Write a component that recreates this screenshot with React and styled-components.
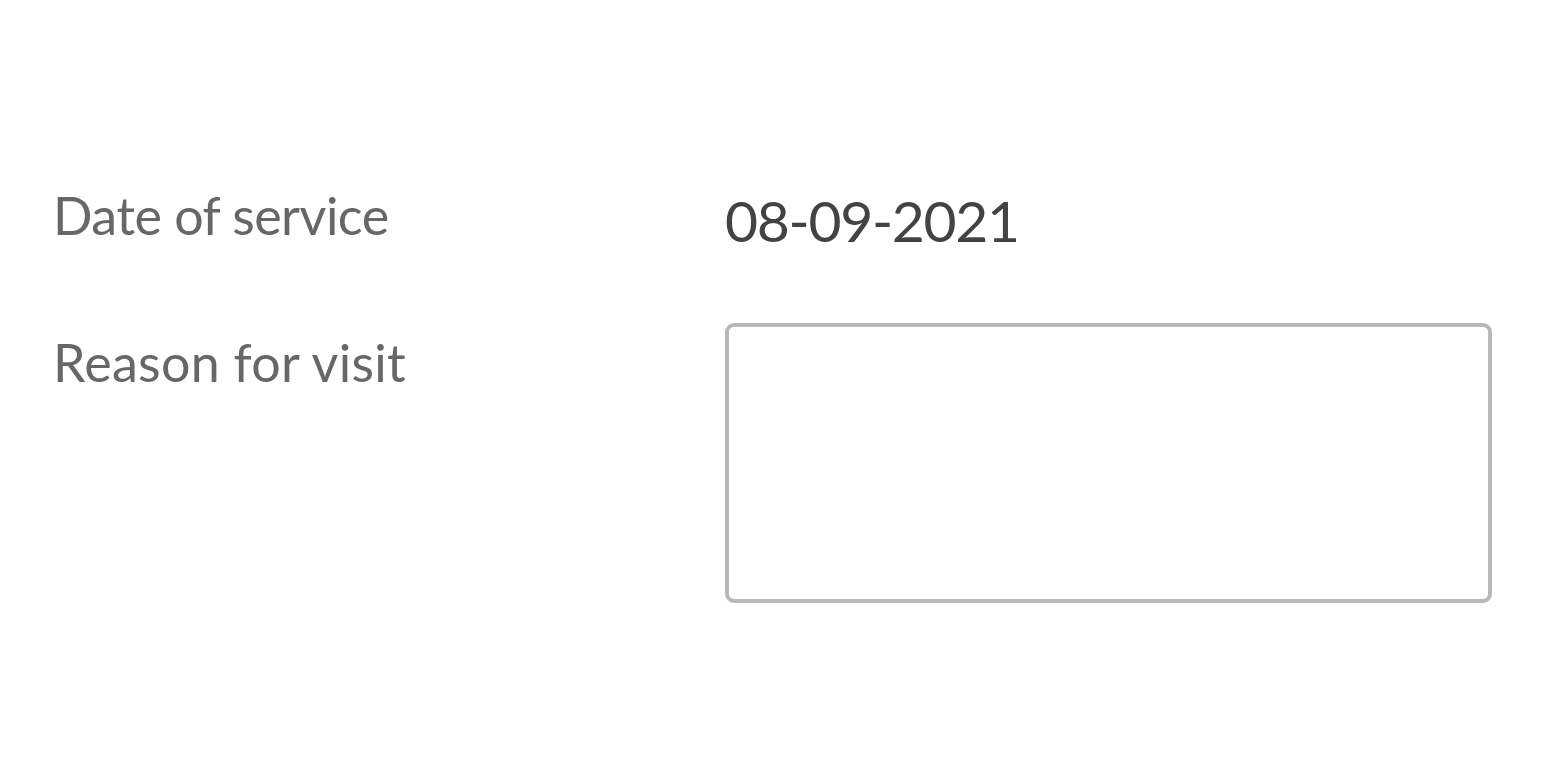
import React from "react";
import styled, { createGlobalStyle } from "styled-components";

const GlobalStyle = createGlobalStyle`
  html, body {
    margin: 0;
    padding: 0;
    background: #ffffff;
  }
  body {
    font-family: Lato, "Open Sans", "Liberation Sans", sans-serif;
  }
`;

const Page = styled.div`
  width: 1548px;
  height: 776px;
  box-sizing: border-box;
  padding: 180px 56px 0 53px;
`;

const Form = styled.div`
  display: grid;
  grid-template-columns: 672px 1fr;
  row-gap: 63px;
  align-items: start;
`;

const Label = styled.div`
  font-size: 52px;
  line-height: 70px;
  color: #676767;
  letter-spacing: ${(p) => p.$spacing ?? -0.5}px;
  padding-top: ${(p) => p.$offset || 0}px;
`;

const Value = styled.div`
  font-size: 57px;
  line-height: 80px;
  color: #434343;
  letter-spacing: -1.3px;
`;

const TextArea = styled.textarea`
  display: block;
  width: 100%;
  height: 280px;
  box-sizing: border-box;
  border: 4px solid #b8b8b8;
  border-radius: 9px;
  resize: none;
  outline: none;
  padding: 12px 16px;
  font: inherit;
  font-size: 32px;
  color: #434343;
  background: #fff;
`;

export default function App() {
  return (
    <>
      <GlobalStyle />
      <Page>
        <Form>
          <Label>Date of service</Label>
          <Value>08-09-2021</Value>
          <Label $offset={4} $spacing={0.3}>Reason for visit</Label>
          <TextArea aria-label="Reason for visit" />
        </Form>
      </Page>
    </>
  );
}
